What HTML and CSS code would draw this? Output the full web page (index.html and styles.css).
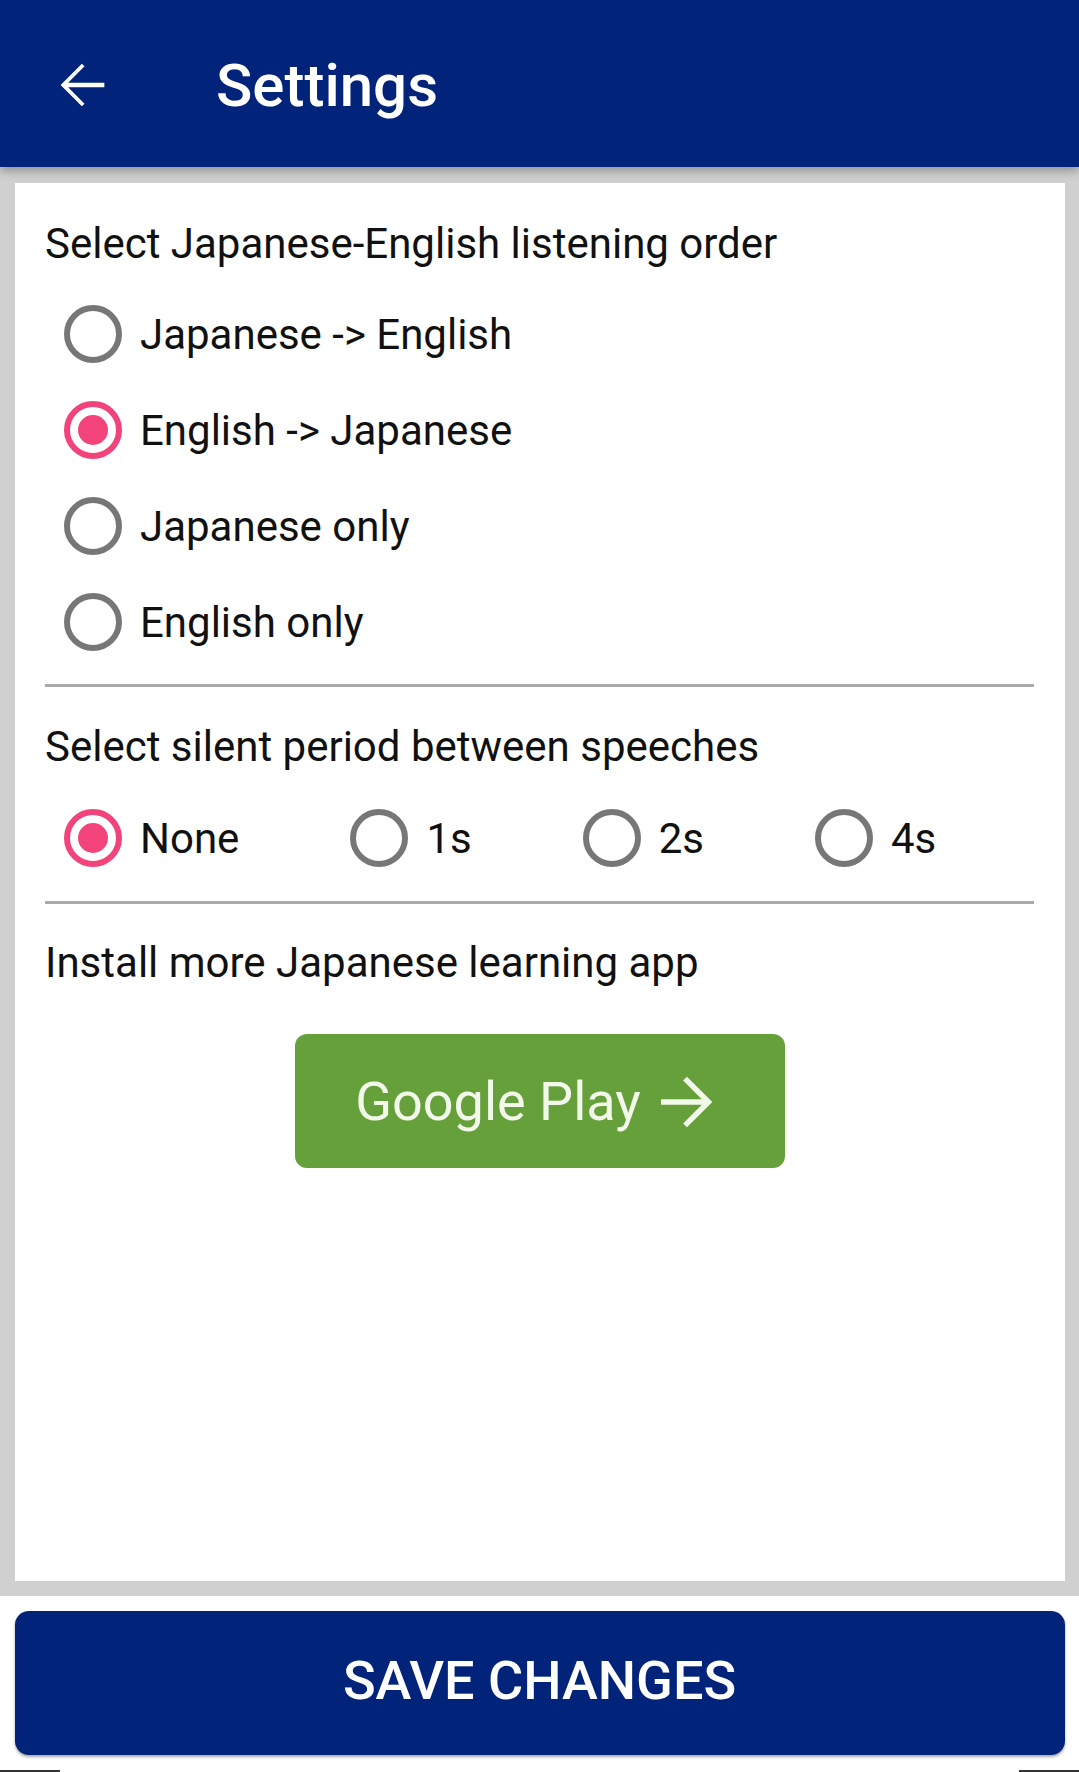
FILE: index.html
```html
<!DOCTYPE html>
<html>
<head>
<meta charset="utf-8">
<link rel="stylesheet" href="styles.css">
</head>
<body>
<div class="app">
  <header class="topbar">
    <svg class="back" viewBox="0 0 24 24" width="70" height="70"><path fill="#fff" d="M20 11.2H7.6l5.6-5.6L12.3 4.7 5 12l7.3 7.3.9-.9-5.6-5.6H20z"/></svg>
    <h1 class="title">Settings</h1>
  </header>
  <main class="main">
    <section class="card">
      <div class="section-title">Select Japanese-English listening order</div>
      <div class="radio-list">
        <div class="radio-row"><span class="radio"></span><span class="label">Japanese -&gt; English</span></div>
        <div class="radio-row"><span class="radio checked"></span><span class="label">English -&gt; Japanese</span></div>
        <div class="radio-row"><span class="radio"></span><span class="label">Japanese only</span></div>
        <div class="radio-row"><span class="radio"></span><span class="label">English only</span></div>
      </div>
      <div class="divider"></div>
      <div class="section-title">Select silent period between speeches</div>
      <div class="radio-inline">
        <div class="radio-row"><span class="radio checked"></span><span class="label">None</span></div>
        <div class="radio-row"><span class="radio"></span><span class="label">1s</span></div>
        <div class="radio-row"><span class="radio"></span><span class="label">2s</span></div>
        <div class="radio-row"><span class="radio"></span><span class="label">4s</span></div>
      </div>
      <div class="divider second"></div>
      <div class="section-title install">Install more Japanese learning app</div>
      <div class="play-wrap">
        <button class="play-btn"><span>Google Play</span><svg viewBox="0 0 24 24" width="78" height="78"><path fill="#f3f9ea" d="M12 4.2l-1.2 1.2 5.75 5.75H4v1.7h12.55L10.8 18.6l1.2 1.2 7.8-7.8z"/></svg></button>
      </div>
    </section>
  </main>
  <footer class="footer">
    <button class="save-btn">SAVE CHANGES</button>
    <div class="navbits"><span class="bit"></span><span class="bit"></span></div>
  </footer>
</div>
</body>
</html>
```
FILE: styles.css
```css
* { box-sizing: border-box; }
html, body { margin: 0; padding: 0; }
body {
  background: #ffffff;
  font-family: Roboto, "Liberation Sans", sans-serif;
  color: #111;
}
.app {
  display: flex;
  flex-direction: column;
  height: 1772px;
}
.topbar {
  height: 167px;
  flex: 0 0 167px;
  background: #012379;
  display: flex;
  align-items: center;
  position: relative;
  z-index: 2;
  box-shadow: 0 3px 10px rgba(0,0,0,0.35);
}
.back {
  margin-left: 46px;
  margin-top: 2px;
  flex: 0 0 auto;
}
.title {
  margin: 4px 0 0 100px;
  color: #fff;
  font-size: 60px;
  font-weight: 500;
}
.main {
  flex: 1;
  background: #d0d0d0;
  padding: 16px 14px 15px 15px;
  display: flex;
}
.card {
  flex: 1;
  background: #fff;
  padding: 31px 31px 0 30px;
}
.section-title {
  font-size: 42px;
  line-height: 60px;
  height: 60px;
  color: #111;
}
.radio-list {
  margin-top: 12px;
  padding-left: 19px;
}
.radio-row {
  display: flex;
  align-items: center;
  height: 96px;
}
.radio {
  width: 58px;
  height: 58px;
  border: 6px solid #777;
  border-radius: 50%;
  flex: 0 0 auto;
  position: relative;
}
.radio.checked {
  border-color: #f2437a;
}
.radio.checked::after {
  content: "";
  position: absolute;
  left: 8px;
  top: 8px;
  width: 30px;
  height: 30px;
  border-radius: 50%;
  background: #f2437a;
}
.label {
  margin-left: 18px;
  font-size: 42px;
  color: #111;
}
.divider {
  height: 3px;
  background: #aaa;
  margin-top: 14px;
  margin-bottom: 30px;
}
.divider.second {
  margin-top: 15px;
  margin-bottom: 29px;
}
.radio-inline {
  margin-top: 13px;
  padding-left: 19px;
  display: flex;
  gap: 111px;
}
.play-wrap {
  display: flex;
  justify-content: center;
  margin-top: 41px;
}
.play-btn {
  width: 490px;
  height: 134px;
  border: none;
  border-radius: 12px;
  background: #66a03a;
  color: #f3f9ea;
  font-family: Roboto, "Liberation Sans", sans-serif;
  font-size: 54px;
  font-weight: 400;
  display: flex;
  align-items: center;
  justify-content: center;
  gap: 7px;
  padding: 0 0 0 2px;
}
.play-btn svg { margin-top: 2px; }
.footer {
  flex: 0 0 176px;
  padding-top: 15px;
  display: flex;
  flex-direction: column;
  align-items: center;
}
.save-btn {
  width: 1050px;
  height: 144px;
  border: none;
  border-radius: 14px;
  background: #012379;
  color: #fff;
  font-family: Roboto, "Liberation Sans", sans-serif;
  font-size: 54px;
  font-weight: 500;
  padding-bottom: 6px;
  box-shadow: 0 2px 3px rgba(0,0,0,0.35);
}
.navbits {
  margin-top: auto;
  width: 100%;
  height: 2px;
  display: flex;
  justify-content: space-between;
}
.bit {
  width: 60px;
  height: 2px;
  background: #333;
}
```
